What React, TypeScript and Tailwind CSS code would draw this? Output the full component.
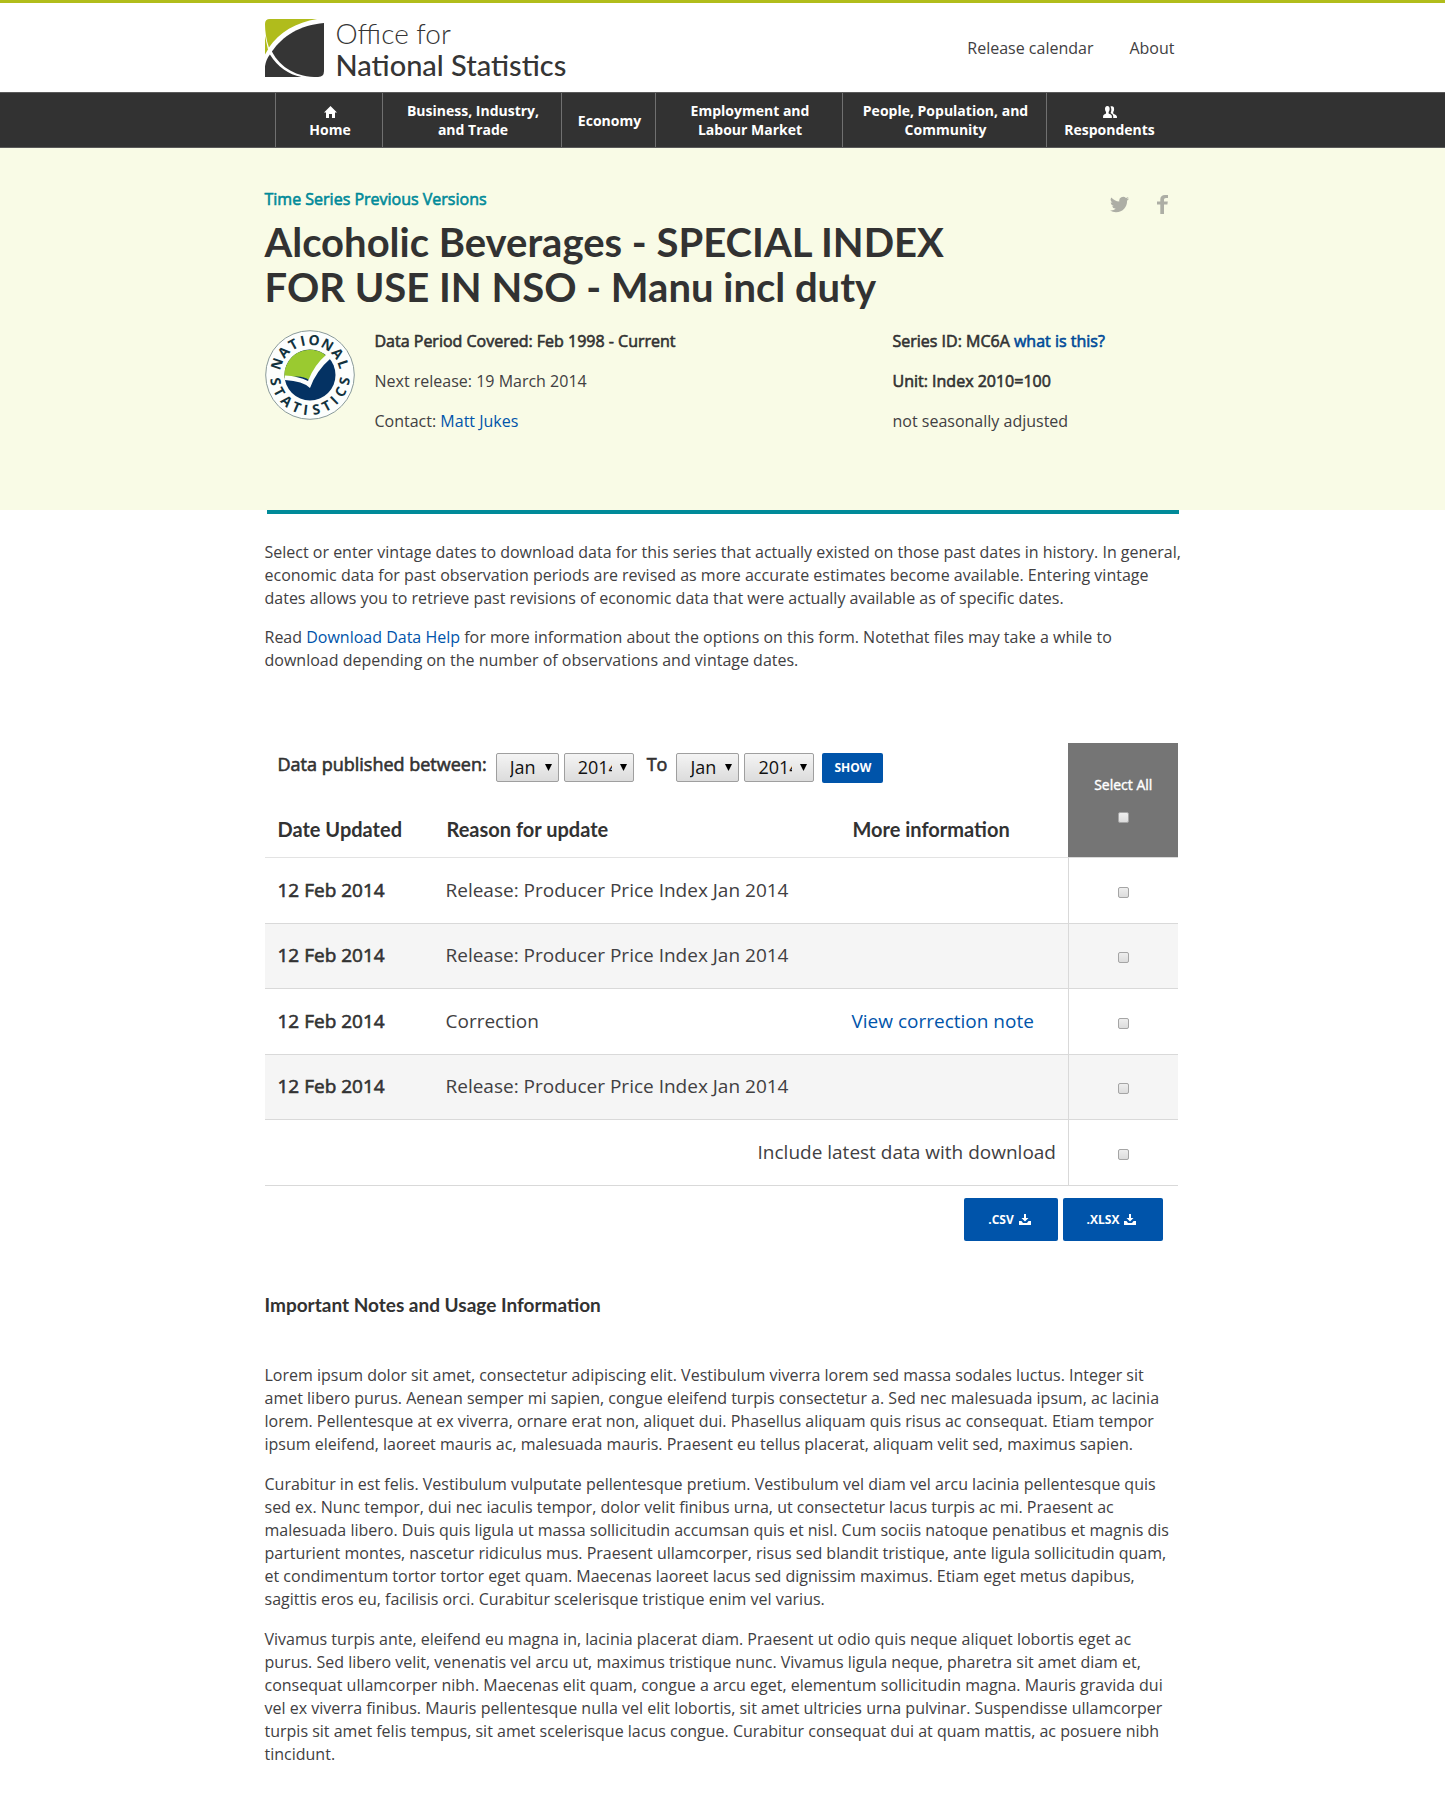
import React from "react";

const NAV = [
  { lines: ["Home"], icon: "home", width: "w-[107px]" },
  { lines: ["Business, Industry,", "and Trade"], width: "w-[179px]" },
  { lines: ["Economy"], width: "w-[94px]" },
  { lines: ["Employment and", "Labour Market"], width: "w-[187px]" },
  { lines: ["People, Population, and", "Community"], width: "w-[204px]" },
  { lines: ["Respondents"], icon: "people", width: "w-[124px]" },
];

const ROWS = [
  { date: "12 Feb 2014", reason: "Release: Producer Price Index Jan 2014", note: "" },
  { date: "12 Feb 2014", reason: "Release: Producer Price Index Jan 2014", note: "" },
  { date: "12 Feb 2014", reason: "Correction", note: "View correction note" },
  { date: "12 Feb 2014", reason: "Release: Producer Price Index Jan 2014", note: "" },
];

const NOTES = [
  [
    "Lorem ipsum dolor sit amet, consectetur adipiscing elit. Vestibulum viverra lorem sed massa sodales luctus. Integer sit",
    "amet libero purus. Aenean semper mi sapien, congue eleifend turpis consectetur a. Sed nec malesuada ipsum, ac lacinia",
    "lorem. Pellentesque at ex viverra, ornare erat non, aliquet dui. Phasellus aliquam quis risus ac consequat. Etiam tempor",
    "ipsum eleifend, laoreet mauris ac, malesuada mauris. Praesent eu tellus placerat, aliquam velit sed, maximus sapien.",
  ],
  [
    "Curabitur in est felis. Vestibulum vulputate pellentesque pretium. Vestibulum vel diam vel arcu lacinia pellentesque quis",
    "sed ex. Nunc tempor, dui nec iaculis tempor, dolor velit finibus urna, ut consectetur lacus turpis ac mi. Praesent ac",
    "malesuada libero. Duis quis ligula ut massa sollicitudin accumsan quis et nisl. Cum sociis natoque penatibus et magnis dis",
    "parturient montes, nascetur ridiculus mus. Praesent ullamcorper, risus sed blandit tristique, ante ligula sollicitudin quam,",
    "et condimentum tortor tortor eget quam. Maecenas laoreet lacus sed dignissim maximus. Etiam eget metus dapibus,",
    "sagittis eros eu, facilisis orci. Curabitur scelerisque tristique enim vel varius.",
  ],
  [
    "Vivamus turpis ante, eleifend eu magna in, lacinia placerat diam. Praesent ut odio quis neque aliquet lobortis eget ac",
    "purus. Sed libero velit, venenatis vel arcu ut, maximus tristique nunc. Vivamus ligula neque, pharetra sit amet diam et,",
    "consequat ullamcorper nibh. Maecenas elit quam, congue a arcu eget, elementum sollicitudin magna. Mauris gravida dui",
    "vel ex viverra finibus. Mauris pellentesque nulla vel elit lobortis, sit amet ultricies urna pulvinar. Suspendisse ullamcorper",
    "turpis sit amet felis tempus, sit amet scelerisque lacus congue. Curabitur consequat dui at quam mattis, ac posuere nibh",
    "tincidunt.",
  ],
];

function Lines({ lines }: { lines: string[] }) {
  return (
    <>
      {lines.map((line, i) => (
        <React.Fragment key={i}>
          {i > 0 && <br />}
          {line}
        </React.Fragment>
      ))}
    </>
  );
}

function LogoMark() {
  return (
    <svg width="59" height="59" viewBox="0 0 60 60" aria-hidden="true">
      <path d="M5 0H53C32 3 14 14 4 29C1 20 0 12 0 5Q0 0 5 0Z" fill="#b0bc1c" />
      <path d="M0 17L3 31L0 36Z" fill="#b0bc1c" />
      <path d="M60 4V53Q60 59 54 59C32 59 16 50 7 33C18 17 36 6 60 4Z" fill="#353535" />
      <path d="M5 36C13 49 24 56 37 59H0V48Q1 41 5 36Z" fill="#353535" />
    </svg>
  );
}

function HomeIcon() {
  return (
    <svg width="13" height="12" viewBox="0 0 13 12" fill="#fff" aria-hidden="true">
      <path d="M6.500 0L13 6.500H11V12H8V8H5V12H2V6.500H0Z" />
    </svg>
  );
}

function PeopleIcon() {
  return (
    <svg width="14" height="12" viewBox="0 0 15 13" fill="#fff" aria-hidden="true">
      <path d="M4.600 0C6.500 0 7.300 1.500 7.100 3.500C7 5 6.400 6 6 6.500V8C7.500 9 9.500 9 9.500 11V13H0V11C0 9 2 9 3.200 8V6.500C2.500 5.500 2.200 4.500 2.100 3.500C2 1.500 2.800 0 4.600 0Z" />
      <path d="M8 .5C11 -.5 12.200 1 11.900 4C11.700 5.500 11.200 6 11 6.500V8C12.500 9 14.500 9.500 15 11.500V13H11V11C11 9.200 9.500 8.500 8.200 7.500C9.300 5 9.200 2.500 8 .5Z" />
    </svg>
  );
}

function DownloadIcon() {
  return (
    <svg width="12" height="11" viewBox="0 0 12 11" fill="#fff" aria-hidden="true">
      <path d="M5 0H7V4H9.500L6 7.500L2.500 4H5Z" />
      <path d="M0 7H2.500L4 9H8L9.500 7H12V11H0Z" />
    </svg>
  );
}

const TOP = [
  ["N", -71], ["A", -49], ["T", -29], ["I", -12], ["O", 7], ["N", 30], ["A", 52], ["L", 72],
] as const;
const BOTTOM = [
  ["S", 79], ["T", 61], ["A", 42], ["T", 23], ["I", 7], ["S", -10], ["T", -28], ["I", -44], ["C", -61], ["S", -80],
] as const;

function Emblem() {
  return (
    <svg width="90" height="90" viewBox="0 0 90 90" role="img" aria-label="National Statistics">
      <circle cx="45" cy="45" r="44.300" fill="#fcfefd" stroke="#8a9a9a" strokeWidth="1" />
      <circle cx="45" cy="45" r="25.500" fill="#043263" />
      <path d="M19.500 48A25.500 25.500 0 0 1 61 25.500Q50 36 44 50Q37 44 19.500 48Z" fill="#9aca30" />
      <path d="M20 45.500Q33 46 43 51Q49 35 62 24L66 28Q51 41 45 58Q38 51 20 50Z" fill="#fcfefd" />
      <g fill="#12323d" fontFamily="Open Sans" fontWeight="700" fontSize="14" textAnchor="middle">
        {TOP.map(([c, a], i) => (
          <text key={i} x="45" y="15" transform={`rotate(${a} 45 45)`}>{c}</text>
        ))}
        {BOTTOM.map(([c, a], i) => (
          <text key={i} x="45" y="85" transform={`rotate(${a} 45 45)`}>{c}</text>
        ))}
      </g>
    </svg>
  );
}

function Select({ label, value, width }: { label: string; value: string; width: string }) {
  return (
    <span className={`relative flex ${width}`}>
      <select
        aria-label={label}
        defaultValue={value}
        className="h-[29px] w-full appearance-none rounded-xs border border-[#9f9f9f] bg-linear-to-b from-[#f4f4f4] to-[#dcdcdc] pr-[21px] pl-[13px] text-[18px] leading-[27px] text-[#111]"
      >
        <option>{value}</option>
      </select>
      <svg className="pointer-events-none absolute top-[11px] right-[7px]" width="7" height="7" viewBox="0 0 7 7" aria-hidden="true">
        <path d="M0 0H7L3.500 7Z" fill="#000" />
      </svg>
    </span>
  );
}

function Check({ label }: { label: string }) {
  return (
    <input
      type="checkbox"
      aria-label={label}
      className="mx-auto block size-[11px] appearance-none rounded-xs border border-[#a5a5a5] bg-linear-to-b from-[#eeeeee] to-[#dcdcdc]"
    />
  );
}

const faux = "[-webkit-text-stroke:0.6px]";

export default function App() {
  return (
    <div className="min-h-screen overflow-hidden bg-white pb-8 font-['Open_Sans',sans-serif] text-[16px] leading-[23px] text-[#414042]">
      <header className="border-t-[3px] border-[#b1bd1b]">
        <div className="mx-auto flex h-[89px] max-w-[916px] items-center justify-between pt-[2px]">
          <a href="#" className="flex items-center gap-3 font-['Lato',sans-serif] leading-8 text-[#353535]">
            <LogoMark />
            <span>
              <span className="block text-[28px] font-light">Office for</span>
              <span className="block text-[29px] font-medium">National Statistics</span>
            </span>
          </a>
          <div className="flex gap-9 pr-[6px]">
            <a href="#">Release calendar</a>
            <a href="#">About</a>
          </div>
        </div>
        <nav className="border-y border-[#5a5a5a] bg-[#323232]">
          <ul className="mx-auto flex h-[54px] max-w-[916px] pl-[10px] text-center text-[14px] leading-[19px] font-bold text-white">
            {NAV.map((item) => (
              <li key={item.lines[0]} className={`border-l border-[#707070] pl-[3px] ${item.width}`}>
                <a href="#" className={`flex h-full flex-col items-center justify-center ${item.icon ? "gap-[2px] pt-1" : ""}`}>
                  {item.icon === "home" && <HomeIcon />}
                  {item.icon === "people" && <PeopleIcon />}
                  <span><Lines lines={item.lines} /></span>
                </a>
              </li>
            ))}
          </ul>
        </nav>
      </header>

      <section className="bg-[#f9fbe6] pb-[77px]">
        <div className="mx-auto max-w-[916px] pt-10">
          <div className="flex items-start justify-between">
            <p className={`text-[#008a99] ${faux}`}>Time Series Previous Versions</p>
            <div className="flex h-6 items-center gap-7 pt-2 pr-[13px]">
              <a href="#" aria-label="Twitter">
                <svg width="19" height="19" viewBox="0 0 24 24" fill="#adaea5"><path d="M23.950 4.570a10 10 0 0 1-2.820.770 4.960 4.960 0 0 0 2.160-2.720c-.950.560-2 .960-3.130 1.190a4.920 4.920 0 0 0-8.380 4.480C7.690 8.090 4.070 6.130 1.640 3.160a4.920 4.920 0 0 0 1.520 6.570 4.900 4.900 0 0 1-2.230-.610v.060c0 2.390 1.700 4.380 3.950 4.830a5 5 0 0 1-2.210.080 4.940 4.940 0 0 0 4.600 3.420A9.870 9.870 0 0 1 0 19.540a14 14 0 0 0 7.550 2.210c9.050 0 14-7.500 14-13.980 0-.210 0-.420-.020-.630a9.940 9.940 0 0 0 2.460-2.550z" /></svg>
              </a>
              <a href="#" aria-label="Facebook">
                <svg width="11" height="19" viewBox="0 0 11 19" fill="#adaea5"><path d="M11 0V3H9C7.500 3 7 3.700 7 5V6.500H10.800L10.400 9.500H7V19H3.300V9.500H0V6.500H3.300V4.500C3.300 1.500 5 0 8 0Z" /></svg>
              </a>
            </div>
          </div>
          <h1 className="mt-2 font-['Lato',sans-serif] text-[40px] leading-[45px] font-bold text-[#323232]">
            Alcoholic Beverages - SPECIAL INDEX<br />FOR USE IN NSO - Manu incl duty
          </h1>
          <div className="mt-5 flex">
            <Emblem />
            <div className="ml-5 flex w-[518px] flex-col gap-[17px]">
              <p className={`text-[#323232] ${faux}`}>Data Period Covered: Feb 1998 - Current</p>
              <p>Next release: 19 March 2014</p>
              <p>Contact: <a href="#" className="text-[#0054aa]">Matt Jukes</a></p>
            </div>
            <div className="flex flex-col gap-[17px]">
              <p className={`text-[#323232] ${faux}`}>Series ID: MC6A <a href="#" className="text-[#004a98]">what is this?</a></p>
              <p className={`text-[#323232] ${faux}`}>Unit: Index 2010=100</p>
              <p>not seasonally adjusted</p>
            </div>
          </div>
        </div>
      </section>

      <main className="mx-auto max-w-[916px]">
        <div className="mx-[2px] h-1 bg-[#008a99]" />
        <div className="mt-[27px] space-y-4 whitespace-nowrap">
          <p>
            Select or enter vintage dates to download data for this series that actually existed on those past dates in history. In general,<br />
            economic data for past observation periods are revised as more accurate estimates become available. Entering vintage<br />
            dates allows you to retrieve past revisions of economic data that were actually available as of specific dates.
          </p>
          <p>
            Read <a href="#" className="text-[#0054aa]">Download Data Help</a> for more information about the options on this form. Notethat files may take a while to<br />
            download depending on the number of observations and vintage dates.
          </p>
        </div>

        <div className="mt-[71px] pr-[3px]">
        <table className="w-full table-fixed border-collapse text-left text-[19px]">
          <colgroup>
            <col className="w-[168px]" />
            <col className="w-[406px]" />
            <col />
            <col className="w-[109px]" />
          </colgroup>
          <thead>
            <tr className="h-[60px]">
              <td colSpan={3} className="pt-[10px] pl-[13px] align-top text-[18px]">
                <div className="flex items-start gap-[5px]">
                  <span className={`mr-1 text-[#323232] ${faux}`}>Data published between:</span>
                  <Select label="From month" value="Jan" width="w-[63px]" />
                  <Select label="From year" value="2014" width="w-[70px]" />
                  <span className={`mr-1 ml-2 text-[#323232] ${faux}`}>To</span>
                  <Select label="To month" value="Jan" width="w-[63px]" />
                  <Select label="To year" value="2014" width="w-[70px]" />
                  <button className="ml-[3px] h-[30px] w-[61px] rounded-xs bg-[#0054aa] text-[12px] leading-[18px] font-bold text-white">SHOW</button>
                </div>
              </td>
              <th rowSpan={2} className="border-b border-l border-b-[#d9d9d9] border-l-[#757575] bg-[#757575] text-center align-top text-[14px] font-normal text-white">
                <span className="mt-[30px] mb-4 block [-webkit-text-stroke:0.4px]">Select All</span>
                <Check label="Select all" />
              </th>
            </tr>
            <tr className="h-[54px] border-b border-[#e3e3e3] font-['Lato',sans-serif] text-[20px] text-[#323232]">
              <th className="pl-[13px] font-bold">Date Updated</th>
              <th className="pl-[14px] font-bold">Reason for update</th>
              <th className="pl-[14px] font-bold">More information</th>
            </tr>
          </thead>
          <tbody>
            {ROWS.map((row, i) => (
              <tr key={i} className="h-[66px] border-b border-[#d9d9d9] even:h-[65px] even:bg-[#f5f5f5]">
                <td className={`pl-[13px] text-[#323232] ${faux}`}>{row.date}</td>
                <td className="pl-[13px]">{row.reason}</td>
                <td className="pl-[13px]">{row.note && <a href="#" className="text-[#0054aa]">{row.note}</a>}</td>
                <td className="border-l border-[#d9d9d9] pt-1"><Check label={`Select row ${i + 1}`} /></td>
              </tr>
            ))}
            <tr className="h-[66px] border-b border-[#d9d9d9]">
              <td colSpan={3} className="pr-3 text-right">Include latest data with download</td>
              <td className="border-l border-[#d9d9d9] pt-1"><Check label="Include latest data with download" /></td>
            </tr>
          </tbody>
        </table>
        </div>

        <div className="mt-3 flex justify-end gap-[5px] pr-[18px] text-[12px] font-bold text-white">
          <button className="flex h-[43px] w-[94px] items-center justify-center gap-[5px] rounded-xs bg-[#0054aa] pr-[2px]">.CSV <DownloadIcon /></button>
          <button className="flex h-[43px] w-[100px] items-center justify-center gap-[5px] rounded-xs bg-[#0054aa] pr-[2px]">.XLSX <DownloadIcon /></button>
        </div>

        <h2 className="mt-[52px] font-['Lato',sans-serif] text-[19px] font-bold text-[#323232]">Important Notes and Usage Information</h2>
        <div className="mt-12 space-y-[17px] whitespace-nowrap">
          {NOTES.map((lines, i) => (
            <p key={i}><Lines lines={lines} /></p>
          ))}
        </div>
      </main>
    </div>
  );
}
